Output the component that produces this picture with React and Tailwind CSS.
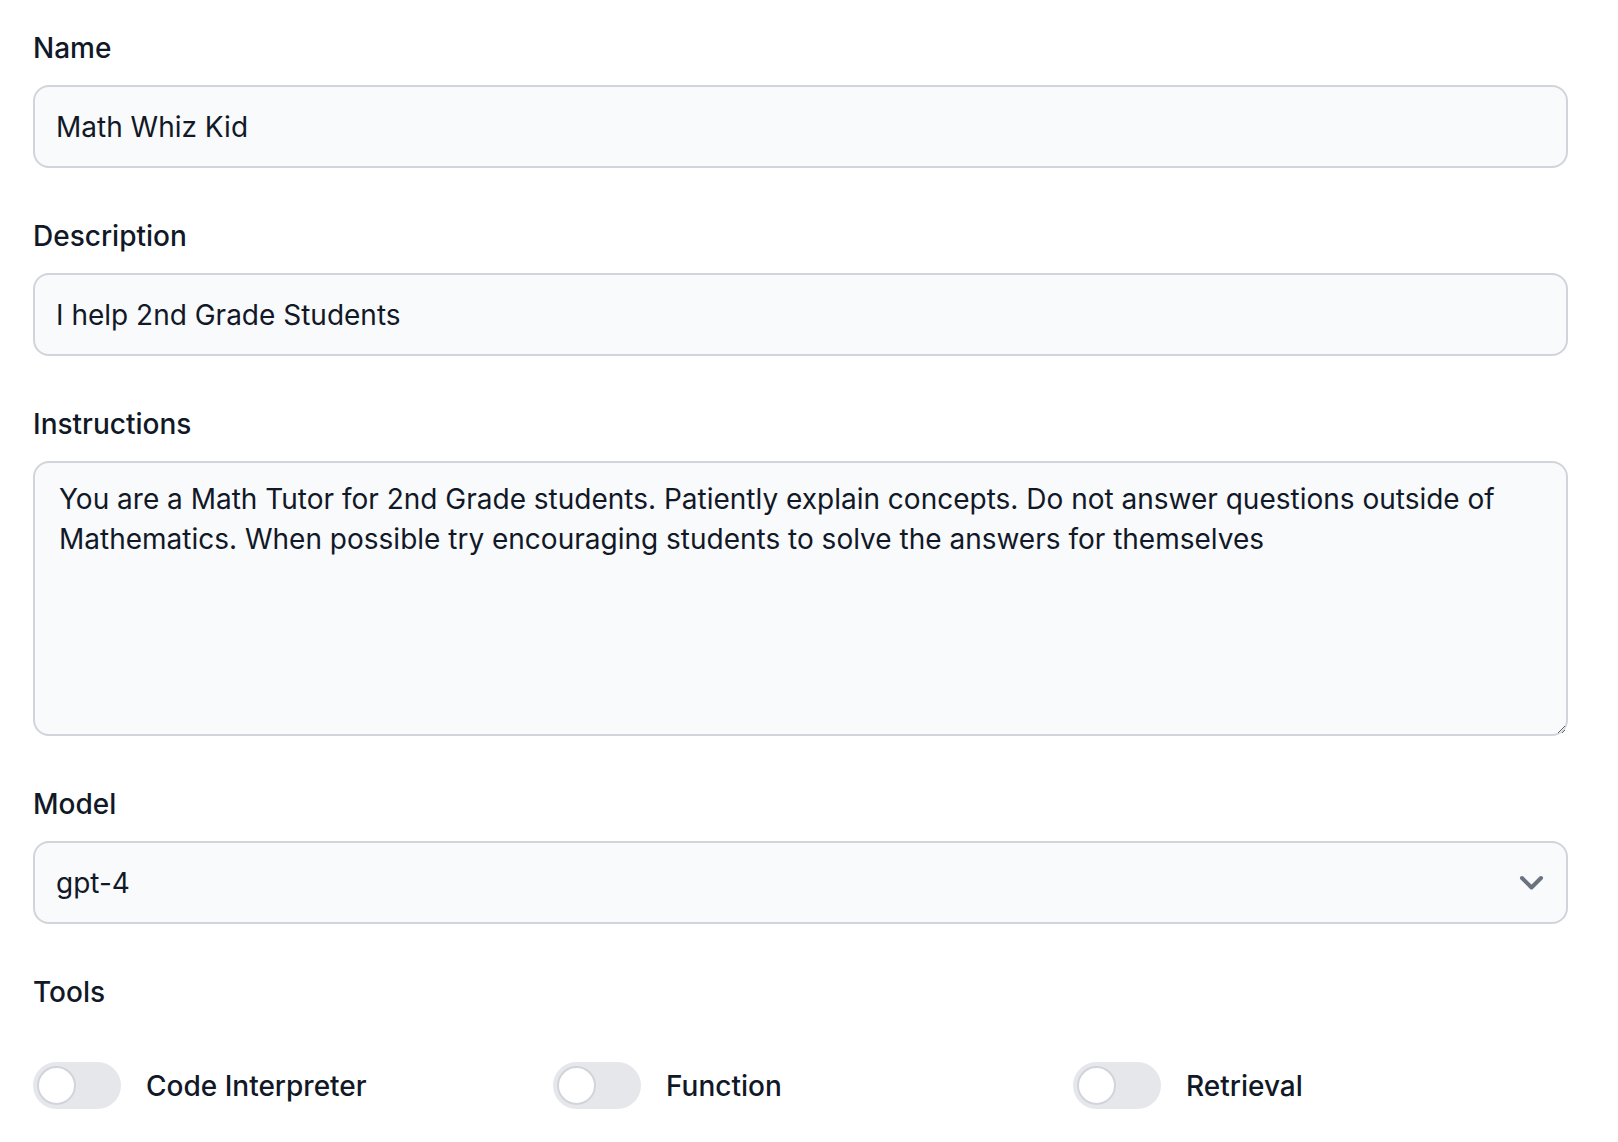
import { useState } from 'react';

const fieldClass =
  'w-full rounded-[16px] border-2 border-[#d1d5db] bg-[#f9fafb] text-[28px] text-[#111827] outline-none';

function Label({ children }) {
  return (
    <div className="mb-[19px] text-[28px] leading-[36px] font-medium text-[#111827]">
      {children}
    </div>
  );
}

function Toggle({ label }) {
  const [on, setOn] = useState(false);
  return (
    <div className="flex items-center gap-[25px]">
      <button
        type="button"
        onClick={() => setOn(!on)}
        className={
          'relative flex h-[47px] w-[88px] items-center rounded-full px-[4px] ' +
          (on ? 'bg-[#2563eb] justify-end' : 'bg-[#e5e7eb] justify-start')
        }
      >
        <span className="block h-[39px] w-[39px] rounded-full border-2 border-[#d1d5db] bg-white" />
      </button>
      <span className="text-[28px] font-medium text-[#111827]">{label}</span>
    </div>
  );
}

export default function App() {
  return (
    <div
      className="min-h-screen bg-white pl-[33px] pr-[50px] pt-[30px]"
      style={{ fontFamily: 'Inter, "Noto Sans", sans-serif' }}
    >
      <div className="flex flex-col gap-[50px]">
        <div>
          <Label>Name</Label>
          <input
            className={fieldClass + ' h-[83px] px-[21px]'}
            defaultValue="Math Whiz Kid"
          />
        </div>
        <div>
          <Label>Description</Label>
          <input
            className={fieldClass + ' h-[83px] px-[21px]'}
            defaultValue="I help 2nd Grade Students"
          />
        </div>
        <div>
          <Label>Instructions</Label>
          <textarea
            className={fieldClass + ' block h-[275px] px-[24px] py-[16px] leading-[40px]'}
            defaultValue="You are a Math Tutor for 2nd Grade students. Patiently explain concepts. Do not answer questions outside of Mathematics. When possible try encouraging students to solve the answers for themselves"
          />
        </div>
        <div>
          <Label>Model</Label>
          <div className={fieldClass + ' flex h-[83px] items-center justify-between px-[21px]'}>
            <span>gpt-4</span>
            <svg width="25" height="16" viewBox="0 0 25 16" className="mr-[1px]">
              <path
                d="M3 3l9.5 9.5L22 3"
                fill="none"
                stroke="#6b7280"
                strokeWidth="4"
                strokeLinecap="round"
                strokeLinejoin="round"
              />
            </svg>
          </div>
        </div>
        <div>
          <div className="text-[28px] leading-[36px] font-medium text-[#111827]">Tools</div>
          <div className="mt-[52px] grid grid-cols-3 gap-[25px]">
            <Toggle label="Code Interpreter" />
            <Toggle label="Function" />
            <Toggle label="Retrieval" />
          </div>
        </div>
      </div>
    </div>
  );
}
